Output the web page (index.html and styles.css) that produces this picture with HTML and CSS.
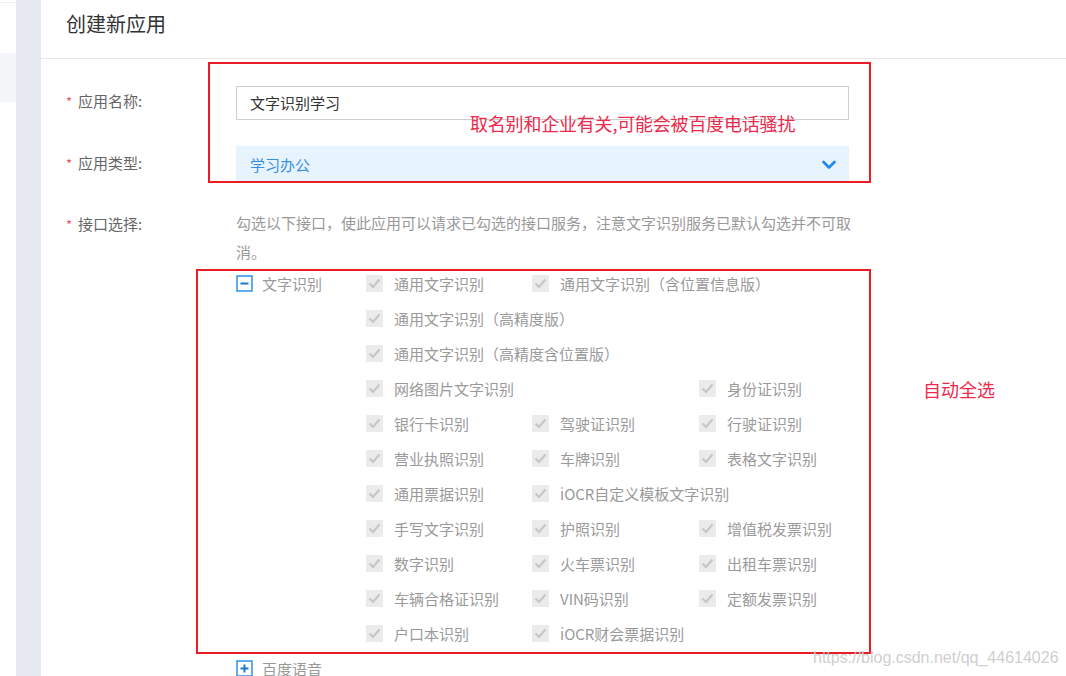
FILE: index.html
```html
<!DOCTYPE html>
<html lang="zh-CN">
<head>
<meta charset="utf-8">
<title>创建新应用</title>
<link rel="stylesheet" href="styles.css">
</head>
<body>
<div class="page">
  <aside class="side-a"><div class="side-a-item"></div></aside>
  <aside class="side-b"></aside>
  <main class="main">
    <header class="header"><h1 class="title">创建新应用</h1></header>
    <div class="form">
      <div class="row row-name">
        <label class="label"><span class="star">*</span>应用名称:</label>
        <div class="control"><div class="input">文字识别学习</div></div>
      </div>
      <div class="row row-type">
        <label class="label"><span class="star">*</span>应用类型:</label>
        <div class="control">
          <div class="select">
            <span>学习办公</span>
            <svg class="chev" width="14" height="10" viewBox="0 0 14 10"><polyline points="1.5,2 7,7.5 12.5,2" fill="none" stroke="#1e88ee" stroke-width="2.6" stroke-linecap="round" stroke-linejoin="round"/></svg>
          </div>
        </div>
      </div>
      <div class="row row-api">
        <label class="label"><span class="star">*</span>接口选择:</label>
        <div class="control">
          <p class="desc">勾选以下接口，使此应用可以请求已勾选的接口服务，注意文字识别服务已默认勾选并不可取消。</p>
          <div class="node">
            <div class="node-head">
              <svg class="toggle" width="17" height="17" viewBox="0 0 17 17"><rect x="1" y="1" width="15" height="15" fill="#fff" stroke="#3b97ea" stroke-width="1.6"/><line x1="4.5" y1="8.5" x2="12.5" y2="8.5" stroke="#1b78d2" stroke-width="2"/></svg>
              <span class="node-name">文字识别</span>
            </div>
            <div class="grid">
              <div class="item"><i class="cb"></i>通用文字识别</div>
              <div class="item span2"><i class="cb"></i>通用文字识别（含位置信息版）</div>
              <div class="item span2"><i class="cb"></i>通用文字识别（高精度版）</div>
              <div class="item span2"><i class="cb"></i>通用文字识别（高精度含位置版）</div>
              <div class="item span2"><i class="cb"></i>网络图片文字识别</div>
              <div class="item"><i class="cb"></i>身份证识别</div>
              <div class="item"><i class="cb"></i>银行卡识别</div>
              <div class="item"><i class="cb"></i>驾驶证识别</div>
              <div class="item"><i class="cb"></i>行驶证识别</div>
              <div class="item"><i class="cb"></i>营业执照识别</div>
              <div class="item"><i class="cb"></i>车牌识别</div>
              <div class="item"><i class="cb"></i>表格文字识别</div>
              <div class="item"><i class="cb"></i>通用票据识别</div>
              <div class="item span2"><i class="cb"></i>iOCR自定义模板文字识别</div>
              <div class="item"><i class="cb"></i>手写文字识别</div>
              <div class="item"><i class="cb"></i>护照识别</div>
              <div class="item"><i class="cb"></i>增值税发票识别</div>
              <div class="item"><i class="cb"></i>数字识别</div>
              <div class="item"><i class="cb"></i>火车票识别</div>
              <div class="item"><i class="cb"></i>出租车票识别</div>
              <div class="item"><i class="cb"></i>车辆合格证识别</div>
              <div class="item"><i class="cb"></i>VIN码识别</div>
              <div class="item"><i class="cb"></i>定额发票识别</div>
              <div class="item"><i class="cb"></i>户口本识别</div>
              <div class="item span2"><i class="cb"></i>iOCR财会票据识别</div>
            </div>
          </div>
          <div class="node">
            <div class="node-head">
              <svg class="toggle" width="17" height="17" viewBox="0 0 17 17"><rect x="1" y="1" width="15" height="15" fill="#fff" stroke="#3b97ea" stroke-width="1.6"/><line x1="4.5" y1="8.5" x2="12.5" y2="8.5" stroke="#1b78d2" stroke-width="2"/><line x1="8.5" y1="4.5" x2="8.5" y2="12.5" stroke="#1b78d2" stroke-width="2"/></svg>
              <span class="node-name">百度语音</span>
            </div>
          </div>
        </div>
      </div>
    </div>
  </main>

  <div class="mark mark-1"></div>
  <div class="mark mark-2"></div>
  <div class="note note-1">取名别和企业有关,可能会被百度电话骚扰</div>
  <div class="note note-2">自动全选</div>
  <div class="watermark">https://blog.csdn.net/qq_44614026</div>
</div>
</body>
</html>
```

FILE: styles.css
```css
* { box-sizing: border-box; }
html, body { margin: 0; padding: 0; }
body {
  font-family: "Noto Sans CJK SC", "Microsoft YaHei", sans-serif;
  font-size: 15px;
  color: #333;
  background: #fff;
}
.page {
  position: relative;
  display: flex;
  width: 1066px;
  height: 676px;
  overflow: hidden;
}
.side-a {
  width: 16px;
  flex: none;
  background: #fff;
  border-top: 1px solid #eceef1;
  margin-top: 2px;
  padding-top: 50px;
}
.side-a-item {
  height: 49px;
  background: #f4f5f8;
}
.side-b {
  width: 25px;
  flex: none;
  background: #e6e9ef;
}
.main {
  flex: 1;
  background: #fff;
}
.header {
  height: 59px;
  border-bottom: 1px solid #e8e8e8;
  padding-left: 25px;
}
.title {
  margin: 0;
  font-size: 20px;
  font-weight: normal;
  line-height: 48px;
  color: #333;
}
.form {
  padding-left: 25px;
  padding-top: 27px;
}
.row {
  display: flex;
}
.label {
  width: 170px;
  flex: none;
  color: #666;
  white-space: nowrap;
}
.star {
  color: #e8545f;
  font-size: 13px;
  display: inline-block;
  width: 12px;
}
.control {
  width: 613px;
}
.row-name .label { line-height: 30px; }
.input {
  height: 34px;
  border: 1px solid #cfcfcf;
  padding-left: 13px;
  line-height: 32px;
  color: #333;
}
.row-type { margin-top: 26px; }
.row-type .label { line-height: 34px; }
.select {
  height: 37px;
  background: #e8f4fd;
  padding: 0 14px;
  display: flex;
  align-items: center;
  justify-content: space-between;
  color: #3a8ee2;
}
.chev { margin-right: -1px; }
.row-api { margin-top: 25px; }
.row-api .label { line-height: 32px; }
.desc {
  margin: 0;
  width: 620px;
  line-height: 29px;
  color: #999;
}
.node-head {
  display: flex;
  align-items: center;
  height: 35px;
  float: left;
  width: 130px;
}
.toggle { flex: none; margin-right: 9px; }
.node-name { color: #999; }
.node::after { content: ""; display: block; clear: both; }
.grid {
  margin-left: 130px;
  display: grid;
  grid-template-columns: 166px 167px 160px;
  grid-auto-rows: 35px;
}
.item {
  display: flex;
  align-items: center;
  white-space: nowrap;
  color: #9a9a9a;
}
.span2 { grid-column: span 2; }
.cb {
  width: 17px;
  height: 17px;
  margin-right: 11px;
  flex: none;
  background: #ebebeb url("data:image/svg+xml;utf8,<svg xmlns='http://www.w3.org/2000/svg' width='17' height='17'><polyline points='3.5,8.5 7,12 13.5,4.5' fill='none' stroke='%23c6c6c6' stroke-width='2.2'/></svg>") no-repeat center;
}
.mark {
  position: absolute;
  border: 2px solid #eb1c24;
  pointer-events: none;
}
.mark-1 { left: 208px; top: 62px; width: 663px; height: 121px; }
.mark-2 { left: 196px; top: 269px; width: 675px; height: 385px; }
.note {
  position: absolute;
  color: #ec2b4c;
  font-size: 18px;
  line-height: 24px;
  white-space: nowrap;
}
.note-1 { left: 470px; top: 111px; letter-spacing: -0.2px; }
.note-2 { left: 923px; top: 377px; }
.watermark {
  position: absolute;
  left: 813px;
  top: 648px;
  font-family: "Liberation Sans", Arial, sans-serif;
  font-size: 16px;
  line-height: 20px;
  color: #cfcfcf;
  white-space: nowrap;
}
```
